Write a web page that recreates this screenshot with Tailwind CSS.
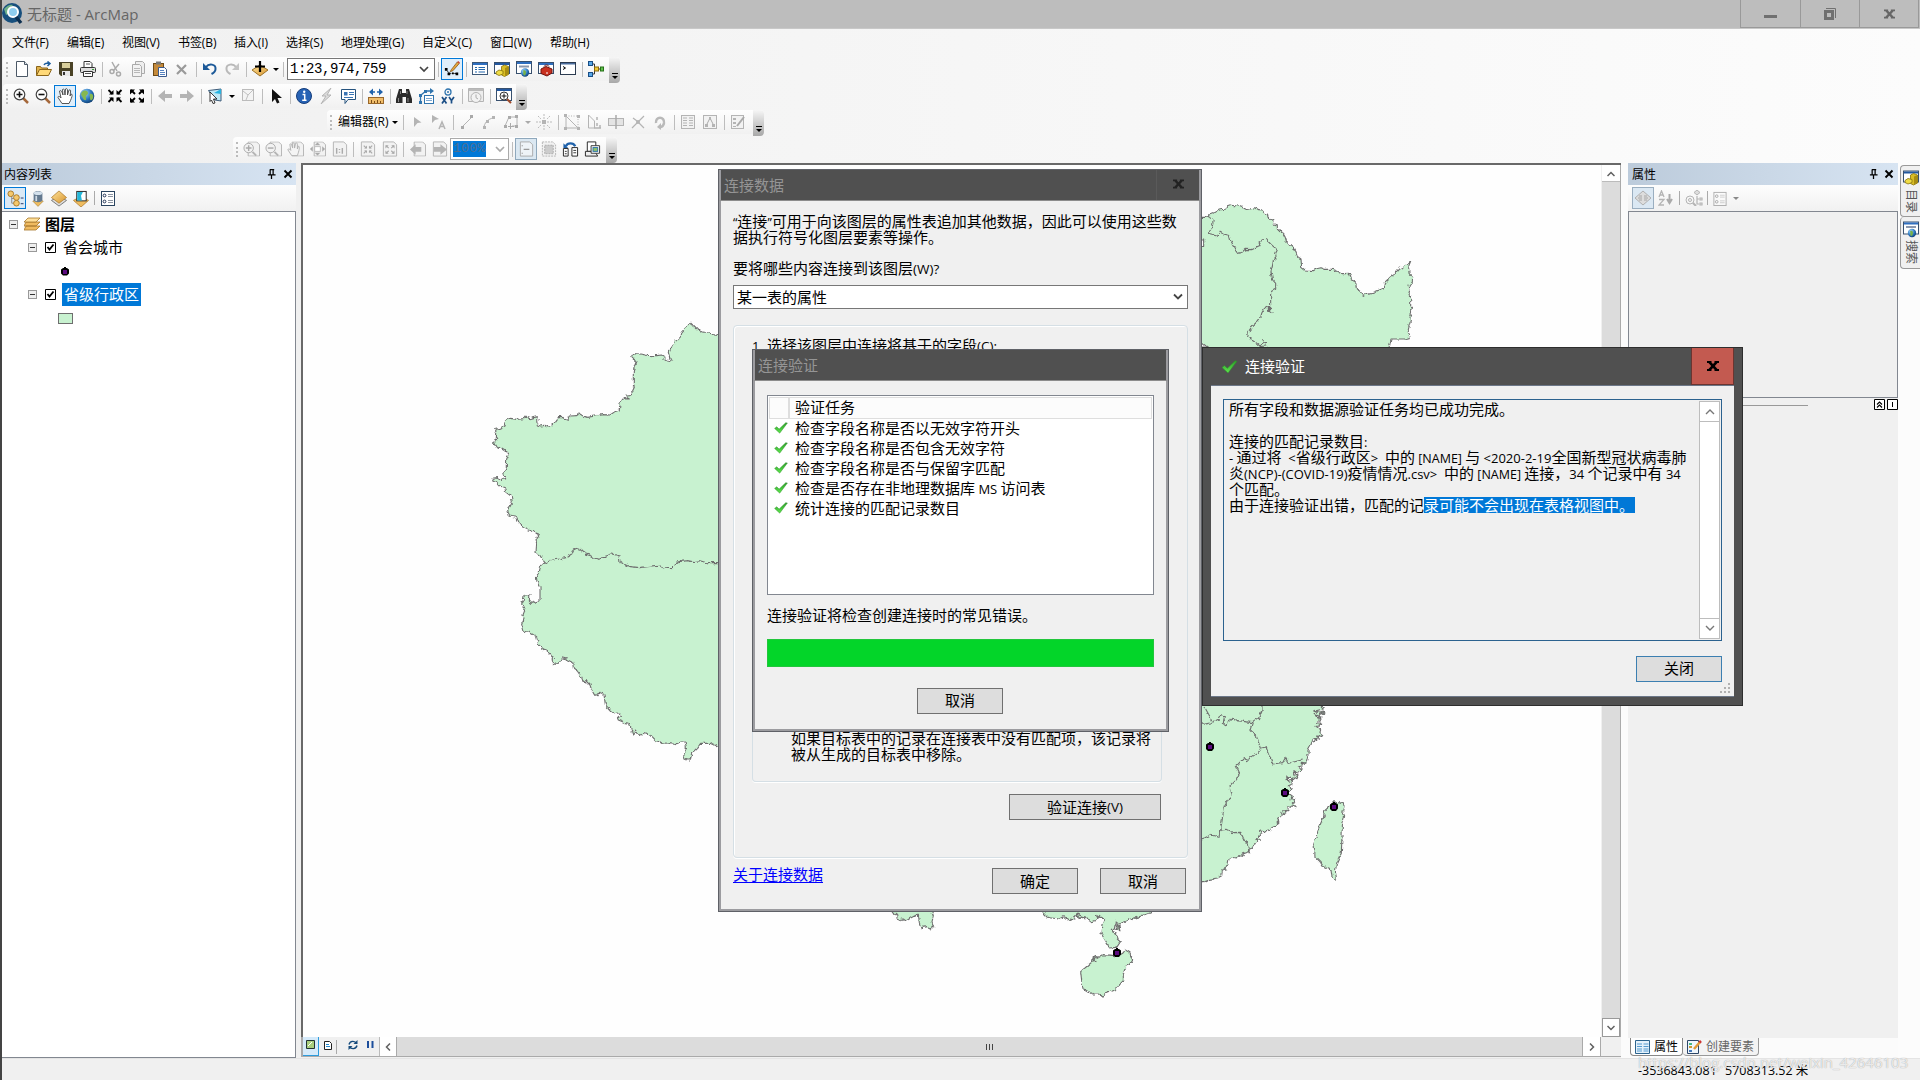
<!DOCTYPE html>
<html lang="zh-CN">
<head>
<meta charset="utf-8">
<title>无标题 - ArcMap</title>
<script src="https://cdn.jsdelivr.net/npm/@tailwindcss/browser@4"></script>
</head>
<body class="relative w-[1920px] h-[1080px] overflow-hidden bg-[#f0f0f0] text-black font-['Open_Sans','Noto_Sans_CJK_SC',sans-serif] text-[12px] leading-none whitespace-nowrap">

<svg width="0" height="0" class="absolute">
  <defs>
    <filter id="coast" x="0" y="0" width="1" height="1" color-interpolation-filters="sRGB"><feTurbulence type="fractalNoise" baseFrequency=".22" numOctaves="2" seed="4" result="n"/><feDisplacementMap in="SourceGraphic" in2="n" scale="5" xChannelSelector="R" yChannelSelector="G"/></filter>
    <radialGradient id="g-globe" cx=".35" cy=".3" r=".8"><stop offset="0" stop-color="#9fd8ff"/><stop offset=".6" stop-color="#2670b8"/><stop offset="1" stop-color="#0b3565"/></radialGradient>
    <linearGradient id="g-check" x1="0" y1="0" x2="0" y2="1"><stop offset="0" stop-color="#2f9c2c"/><stop offset="1" stop-color="#5ee64e"/></linearGradient>
    <linearGradient id="g-gold" x1="0" y1="0" x2="1" y2="1"><stop offset="0" stop-color="#ffe39a"/><stop offset="1" stop-color="#d8952f"/></linearGradient>
    <symbol id="new" viewBox="0 0 16 16"><path d="M2.500.5h8l3 3v12h-11z" fill="#fff" stroke="#4c5866"/><path d="M10.500.5v3h3" fill="#dfe8f0" stroke="#4c5866"/></symbol>
    <symbol id="open" viewBox="0 0 16 16"><path d="M.5 14.500v-9h4l1 1.500h6v3" fill="#e0b24c" stroke="#8a651b"/><path d="M.5 14.500l3-6h12l-3 6z" fill="#ffd978" stroke="#8a651b"/><path d="M8 4c1-2 3-2 5-1.500M11.500.5L14 2.500l-2.500 2.500" fill="none" stroke="#1b5c9e" stroke-width="1.500"/></symbol>
    <symbol id="save" viewBox="0 0 16 16"><path d="M1 1h14v14H3l-2-2z" fill="#4a4326"/><rect x="4" y="2" width="8" height="5" fill="#d9cf9c"/><rect x="4" y="10" width="8" height="5" fill="#e8e8e8"/><rect x="5" y="11" width="2" height="3" fill="#333"/></symbol>
    <symbol id="print" viewBox="0 0 16 16"><path d="M4 6V.5h6l2 2V6" fill="#fff" stroke="#333"/><rect x=".5" y="6.500" width="15" height="5" rx="1" fill="#ddd" stroke="#333"/><path d="M3.500 10.500h9v5h-9z" fill="#fff" stroke="#333"/><path d="M5 12.500h6M6 3h4" stroke="#555"/><rect x="12" y="8" width="2" height="1" fill="#3a9c3a"/></symbol>
    <symbol id="cut" viewBox="0 0 16 16"><path d="M4 1l5 9M11 3l-6 7" stroke="#aaa" stroke-width="1.500" fill="none"/><circle cx="4" cy="10.500" r="2" fill="none" stroke="#aaa" stroke-width="1.500"/><circle cx="10.500" cy="13" r="2" fill="none" stroke="#aaa" stroke-width="1.500"/></symbol>
    <symbol id="copy" viewBox="0 0 16 16"><path d="M5.500.5h7l2 2v10h-9z" fill="#eee" stroke="#aaa"/><path d="M2.500 3.500h7l2 2v10h-9z" fill="#f2f2f2" stroke="#aaa"/><path d="M4 7.500h6M4 9.500h6M4 11.500h6" stroke="#b8b8b8"/></symbol>
    <symbol id="paste" viewBox="0 0 16 16"><rect x="1.500" y="2.500" width="10" height="12" fill="#c58a3a" stroke="#6d4a17"/><rect x="4" y=".5" width="5" height="3" fill="#777"/><path d="M6.500 6.500h6l2 2v7h-8z" fill="#fff" stroke="#3c5a8c"/><path d="M8 9.500h4M8 11.500h5M8 13.500h5" stroke="#5582c0"/></symbol>
    <symbol id="del" viewBox="0 0 16 16"><path d="M3 4l9 9M12 4l-9 9" stroke="#9a9a9a" stroke-width="2.200"/></symbol>
    <symbol id="undo" viewBox="0 0 16 16"><path d="M4 6c3-4 10-3 9.500 2 0 2.500-2 4-4 5" fill="none" stroke="#1d5a99" stroke-width="2"/><path d="M1 2v7h7z" fill="#1d5a99"/></symbol>
    <symbol id="redo" viewBox="0 0 16 16"><path d="M12 6c-3-4-10-3-9.500 2 0 2.500 2 4 4 5" fill="none" stroke="#b9b9b9" stroke-width="2"/><path d="M15 2v7H8z" fill="#c4c4c4"/></symbol>
    <symbol id="add" viewBox="0 0 16 16"><path d="M8 4l8 5-8 6-8-6z" fill="url(#g-gold)" stroke="#9b7125"/><path d="M8 0v11M3 5.500h10" stroke="#000" stroke-width="2.200"/></symbol>
    <symbol id="editor" viewBox="0 0 18 18"><path d="M2 9l4 5h8" fill="none" stroke="#000" stroke-dasharray="2 1"/><path d="M1 8h3v3H1zM4 13h3v3H4zM13 13h3v3h-3zM9 13h2v2H9z"/><path d="M8 10l7-9 2 2-7 8-3 1z" fill="#e7a83c" stroke="#7b4d12" stroke-width=".8"/><path d="M15 1l2 2 1-1-2-2z" fill="#d0442c"/></symbol>
    <symbol id="toc" viewBox="0 0 16 16"><rect x=".5" y="1.500" width="15" height="12" fill="#fff" stroke="#3c5878"/><rect x="1" y="2" width="14" height="2" fill="#2f6fc0"/><path d="M3 6.500h2M3 8.500h2M3 11h2M6.500 6.500H13M6.500 8.500H13M6.500 11H13" stroke="#2569ad" stroke-width="1.200"/></symbol>
    <symbol id="catalog" viewBox="0 0 16 16"><rect x=".5" y="1.500" width="15" height="11" fill="#fff" stroke="#38506e"/><rect x="1" y="2" width="14" height="2" fill="#2358a0"/><path d="M7.500 5.500l3-1.500 4 1.500v8l-4 2-3-1.500z" fill="#d9bd25" stroke="#87710d" stroke-width=".8"/><path d="M11 7v8l3.500-2V5.500z" fill="#a88d10"/><path d="M2 11l3-2 4 1v3l-4 1.500L2 13z" fill="#efdc45" stroke="#87710d" stroke-width=".8"/></symbol>
    <symbol id="search" viewBox="0 0 16 16"><rect x=".5" y=".5" width="15" height="12" fill="#fff" stroke="#38506e"/><rect x="1" y="1" width="14" height="2" fill="#2f6fc0"/><path d="M3 5.500h10" stroke="#8a97ad" stroke-width="2"/><circle cx="9" cy="11.500" r="4.200" fill="url(#g-globe)"/><path d="M7 9.500c3-1 4 2 2 5-3 0-1-3-2-5" fill="#75b04a"/></symbol>
    <symbol id="toolbox" viewBox="0 0 16 16"><rect x=".5" y="1.500" width="15" height="11" fill="#fff" stroke="#38506e"/><rect x="1" y="2" width="14" height="2" fill="#2f6fc0"/><path d="M3 8l5-2.500 6 2.500v4l-5 3-6-2.500z" fill="#c9301f" stroke="#6f1510"/><path d="M6 5.500c1-2 4-2 5 0" fill="none" stroke="#6f1510"/><path d="M9 11v2" stroke="#fff"/></symbol>
    <symbol id="python" viewBox="0 0 16 16"><rect x=".5" y="1.500" width="15" height="12" fill="#fff" stroke="#2c3b50"/><rect x="1" y="2" width="14" height="1.500" fill="#4a6c9c"/><path d="M3 5.500l2.500 1.500L3 8.500" fill="none" stroke="#000"/></symbol>
    <symbol id="model" viewBox="0 0 16 16"><path d="M4 3h2.500v10H4M6.500 8h6" fill="none" stroke="#333"/><rect x=".5" y=".5" width="4" height="4" fill="#58a8e8" stroke="#1a4e86"/><rect x=".5" y="11.500" width="4" height="4" fill="#58a8e8" stroke="#1a4e86"/><rect x="6.500" y="6" width="4" height="4" fill="#f2c938" stroke="#8a6a0c"/><rect x="12.500" y="6" width="3" height="4" fill="#5fc14c" stroke="#277018"/></symbol>
    <symbol id="zin" viewBox="0 0 16 16"><path d="M10 10l5 5" stroke="#a5683b" stroke-width="2.500"/><circle cx="6.500" cy="6.500" r="5.300" fill="#fff" stroke="#444" stroke-width="1.200"/><path d="M3.500 6.500h6M6.500 3.500v6" stroke="#111" stroke-width="1.600"/></symbol>
    <symbol id="zout" viewBox="0 0 16 16"><path d="M10 10l5 5" stroke="#a5683b" stroke-width="2.500"/><circle cx="6.500" cy="6.500" r="5.300" fill="#fff" stroke="#444" stroke-width="1.200"/><path d="M3.500 6.500h6" stroke="#111" stroke-width="1.600"/></symbol>
    <symbol id="pan" viewBox="0 0 16 16"><path d="M5 15.500L1 9.500c0-2 2-1 3 .5L2.500 3c1-1 2 0 2.500 1l1 3-.5-5.500c1-1 2 0 2 1L8 7l.5-6c1-1 2 0 2 1V7l1.500-5c1-.5 2 0 1.500 2L13 8l1-2c2 0 1 3-.5 6.500L12 15.500z" fill="#fff" stroke="#444" stroke-width=".9"/></symbol>
    <symbol id="globe" viewBox="0 0 16 16"><circle cx="8" cy="8" r="7.300" fill="url(#g-globe)"/><path d="M3 4c3-3 6-1 6 1s-3 2-2 5-2 3-3 0-3-3-1-6zM11 6c2-1 4 1 3 4s-3 3-3 0 -1-3 0-4z" fill="#86b850"/></symbol>
    <symbol id="fin" viewBox="0 0 16 16"><path d="M1.500 2l4 4M14.500 2l-4 4M1.500 14l4-4M14.500 14l-4-4" stroke="currentColor" stroke-width="1.800"/><path d="M6.500 2v4.500H2zM9.500 2v4.500H14zM2 9.500h4.500V14zM14 9.500H9.500V14z" fill="currentColor"/></symbol>
    <symbol id="fout" viewBox="0 0 16 16"><path d="M2 2l4 4M14 2l-4 4M2 14l4-4M14 14l-4-4" stroke="currentColor" stroke-width="1.800"/><path d="M1 1.500h5L1 6.500zM15 1.500h-5l5 5zM1 14.500h5l-5-5zM15 14.500h-5l5-5z" fill="currentColor"/></symbol>
    <symbol id="back" viewBox="0 0 16 16"><path d="M8 2v4h7v4H8v4L1 8z" fill="#b4b4b4"/></symbol>
    <symbol id="fwd" viewBox="0 0 16 16"><path d="M8 2v4H1v4h7v4l7-6z" fill="#b4b4b4"/></symbol>
    <symbol id="selfeat" viewBox="0 0 16 16"><path d="M1.500 2.500L14 1v12l-6-1z" fill="#bfe8f5" stroke="#3c5a78"/><path d="M7 5l7-4v5z" fill="#28b4e0"/><path d="M3 4l7 7H6.500L8 15l-2 .5L4.500 12 3 13.500z" fill="#fff" stroke="#222" stroke-width=".9"/></symbol>
    <symbol id="clrsel" viewBox="0 0 16 16"><rect x="2.500" y="1.500" width="11" height="11" fill="#f4f4f4" stroke="#bbb"/><path d="M3 3l5 4 5-5M8 7l-2 5" fill="none" stroke="#c0c0c0"/></symbol>
    <symbol id="arrow" viewBox="0 0 16 16"><path d="M4 1v13l3-3 2 4.500 2.500-1-2-4.500H14z" fill="#111"/></symbol>
    <symbol id="info" viewBox="0 0 16 16"><circle cx="8" cy="8" r="7.500" fill="#2763b5" stroke="#153e7c"/><path d="M6.500 6.500h2.200v5.500M6.200 12.300h4.300" fill="none" stroke="#fff" stroke-width="1.500"/><circle cx="8.200" cy="3.800" r="1.200" fill="#fff"/></symbol>
    <symbol id="bolt" viewBox="0 0 16 16"><path d="M13 0L4 8h4l-5 8 10-9H9z" fill="#ddd" stroke="#b4b4b4"/></symbol>
    <symbol id="popup" viewBox="0 0 16 16"><path d="M1.500 1.500h14v10H8l-3 4v-4H1.500z" fill="#fff" stroke="#25527d"/><path d="M9 4.500h5M9 6.500h5M4 9.500h9" stroke="#3a75b4"/><rect x="4" y="4" width="3.500" height="3.500" fill="#3a75b4"/></symbol>
    <symbol id="measure" viewBox="0 0 16 16"><rect x=".5" y="9.500" width="15" height="6" fill="#f0bd6a" stroke="#99672a"/><path d="M3.500 12v3M6.500 13v2M9.500 12v3M12.500 13v2" stroke="#7a4d18"/><path d="M4 4h8" stroke="#1f62ab" stroke-width="1.500" stroke-dasharray="3 2"/><path d="M5 .5v7L1 4zM11 .5v7L15 4z" fill="#1f62ab"/></symbol>
    <symbol id="find" viewBox="0 0 16 16"><path d="M3 1h3v4h4V1h3l3 10v4h-6V9H6.500v6H0v-4z" fill="#2b2b2b"/><path d="M2.500 10v4M12 10v4M4.500 3v3M11 3v3" stroke="#888"/></symbol>
    <symbol id="route" viewBox="0 0 16 16"><rect x="6.500" y="7.500" width="9" height="8" fill="#fff" stroke="#2f74ae"/><path d="M8 10.500h6M8 12.500h6" stroke="#7ba6cf"/><path d="M2.500 14V8M3 7l5-4h5" fill="none" stroke="#2f74ae" stroke-width="1.300"/><path d="M1 6h3v3H1zM1 13h3v3H1zM6 2h3v3H6zM12 0l4 3-4 3z" fill="#2f74ae"/></symbol>
    <symbol id="xy" viewBox="0 0 16 16"><circle cx="8" cy="4" r="3" fill="none" stroke="#2f74ae" stroke-width="1.300"/><circle cx="8" cy="4" r="1" fill="#2f74ae"/><path d="M2 9l4.500 6.500M6.500 9L2 15.500M9 9l2.500 3.500L14 9M11.500 12v3.500" fill="none" stroke="#1c4f86" stroke-width="1.700"/></symbol>
    <symbol id="clock" viewBox="0 0 16 16"><path d="M.5.500h15v13H.5z" fill="#ededed" stroke="#b4b4b4"/><path d="M1 2h14" stroke="#bbb" stroke-width="2"/><circle cx="8" cy="9.500" r="5" fill="#f2f2f2" stroke="#b4b4b4"/><path d="M8 6.500v3.200l2 1.300" fill="none" stroke="#aaa"/></symbol>
    <symbol id="viewer" viewBox="0 0 16 16"><rect x=".5" y=".5" width="15" height="12" fill="#fff" stroke="#38506e"/><rect x="1" y="1" width="14" height="2" fill="#2358a0"/><path d="M11 11l4 4" stroke="#9d4a2b" stroke-width="2"/><circle cx="8" cy="8" r="4" fill="#fff" stroke="#333"/><path d="M5.500 8h5M8 5.500v5" stroke="#111"/></symbol>
    <symbol id="e1" viewBox="0 0 16 16"><path d="M5 3v10l3.500-4 4-.5z" fill="#b4b4b4"/></symbol>
    <symbol id="e2" viewBox="0 0 16 16"><path d="M1 1v8l3-3 4-1z" fill="#b4b4b4"/><path d="M8 15l3-7 3 7M9 12.500h4" fill="none" stroke="#b4b4b4" stroke-width="1.500"/></symbol>
    <symbol id="e3" viewBox="0 0 16 16"><path d="M3 13L13 3" stroke="#b4b4b4"/><path d="M2 12h3v3H2zM11 1h3v3h-3z" fill="#aaa"/></symbol>
    <symbol id="e4" viewBox="0 0 16 16"><path d="M3 14c0-5 4-9 9-10" fill="none" stroke="#b4b4b4"/><path d="M2 12h3v3H2zM11 2h3v3h-3zM5 6h3v3H5z" fill="#b4b4b4"/></symbol>
    <symbol id="e5" viewBox="0 0 16 16"><path d="M2 12l4-9h8v9H9" fill="none" stroke="#b4b4b4"/><path d="M5 2h3v3H5zM12 1h3v3h-3zM1 11h3v3H1zM12 11h3v3h-3zM7 9h1v6H7zM5 12h6v1H5z" fill="#aaa"/></symbol>
    <symbol id="e6" viewBox="0 0 16 16"><path d="M8 0v5M8 11v5M0 8h5M11 8h5M2 2l3 3M14 2l-3 3M2 14l3-3M14 14l-3-3" stroke="#bbb" stroke-dasharray="2 1"/><rect x="6" y="6" width="4" height="4" fill="#b4b4b4"/></symbol>
    <symbol id="e7" viewBox="0 0 16 16"><path d="M2 2v12h12" fill="none" stroke="#b4b4b4"/><path d="M2 2h12v12" fill="none" stroke="#b4b4b4" stroke-dasharray="1 1.500"/><path d="M2 2l12 12" stroke="#b4b4b4"/><path d="M0 0h3v3H0zM13 1h3v3h-3zM0 13h3v3H0zM13 13h3v3h-3z" fill="#b4b4b4"/></symbol>
    <symbol id="e8" viewBox="0 0 16 16"><path d="M2.500 1v13h6V7z" fill="none" stroke="#b4b4b4"/><path d="M11 3v3M11 9v3M14 11v3M8 14h7" stroke="#b4b4b4" stroke-width="1.500"/></symbol>
    <symbol id="e9" viewBox="0 0 16 16"><rect x=".5" y="4.500" width="15" height="7" fill="#e4e4e4" stroke="#b4b4b4"/><path d="M8 1v14" stroke="#aaa" stroke-width="1.500"/></symbol>
    <symbol id="e10" viewBox="0 0 16 16"><path d="M2 14L14 2M3 4l4 3M9 9l5 5" stroke="#b4b4b4" stroke-width="1.200"/><circle cx="8" cy="8" r="2" fill="#b4b4b4"/></symbol>
    <symbol id="e11" viewBox="0 0 16 16"><path d="M4 9c-1-7 9-7 8 0-.5 3-2 4-4 4" fill="none" stroke="#b9b9b9" stroke-width="2.500"/><path d="M9 9v7l-4-3z" fill="#b9b9b9"/></symbol>
    <symbol id="e12" viewBox="0 0 16 16"><rect x="1.500" y="1.500" width="13" height="13" fill="#f2f2f2" stroke="#b4b4b4"/><path d="M3 4h4M3 6.500h4M3 9h4M3 11.500h4M9 4h4M9 6.500h4M9 9h4M9 11.500h4" stroke="#b4b4b4"/></symbol>
    <symbol id="e13" viewBox="0 0 16 16"><rect x="1.500" y="1.500" width="13" height="13" fill="#f2f2f2" stroke="#b4b4b4"/><path d="M4 12l4-8 4 8" fill="none" stroke="#aaa"/><path d="M7 3h2v3H7zM3 10h3v3H3zM10 10h3v3h-3z" fill="#b4b4b4"/></symbol>
    <symbol id="e14" viewBox="0 0 16 16"><rect x="1.500" y="1.500" width="12" height="13" fill="#f2f2f2" stroke="#b4b4b4"/><path d="M3 4h3v2H3zM3 8h3v2H3zM3 12h3v1H3z" fill="#b4b4b4"/><path d="M7 12l7-9" stroke="#aaa" stroke-width="2"/></symbol>
    <symbol id="page" viewBox="0 0 18 16"><path d="M5.500.5h9l3 3v12h-12z" fill="#f2f2f2" stroke="#b4b4b4"/></symbol>
    <symbol id="p1" viewBox="0 0 18 16"><use href="#page"/><circle cx="6" cy="7" r="5" fill="#f2f2f2" stroke="#aaa"/><path d="M3 7h6M6 4v6" stroke="#aaa" stroke-width="1.500"/><path d="M10 11l4 4" stroke="#b4b4b4" stroke-width="2"/></symbol>
    <symbol id="p2" viewBox="0 0 18 16"><use href="#page"/><circle cx="6" cy="7" r="5" fill="#f2f2f2" stroke="#aaa"/><path d="M3 7h6" stroke="#aaa" stroke-width="1.500"/><path d="M10 11l4 4" stroke="#b4b4b4" stroke-width="2"/></symbol>
    <symbol id="p3" viewBox="0 0 18 16"><use href="#page"/><path d="M5 15L1 9c0-2 2-1 3 .5L3 3c1-1 2 0 2 1l1 3V2c1-1 2 0 2 1v4l1-5c1-1 2 0 2 1v5l1-3c2 0 1 4-1 10z" fill="#f4f4f4" stroke="#b0b0b0"/></symbol>
    <symbol id="p4" viewBox="0 0 18 16"><use href="#page"/><path d="M9 1l3 3H6zM9 15l3-3H6zM1 8l3-3v6zM17 8l-3-3v6z" fill="#aaa"/><rect x="6" y="5.500" width="6" height="5" fill="#fff" stroke="#bbb"/></symbol>
    <symbol id="p5" viewBox="0 0 18 16"><path d="M2.500.5h11l3 3v12h-14z" fill="#f2f2f2" stroke="#b4b4b4"/><path d="M6 7v6M12 7v6M9 8v1M9 11v1" stroke="#aaa" stroke-width="1.500"/></symbol>
    <symbol id="p6" viewBox="0 0 18 16"><path d="M2.500.5h11l3 3v12h-14z" fill="#f2f2f2" stroke="#b4b4b4"/><svg x="4" y="3" width="11" height="11" class="text-[#aaa]"><use href="#fin"/></svg></symbol>
    <symbol id="p7" viewBox="0 0 18 16"><path d="M2.500.5h11l3 3v12h-14z" fill="#f2f2f2" stroke="#b4b4b4"/><svg x="4" y="3" width="11" height="11" class="text-[#aaa]"><use href="#fout"/></svg></symbol>
    <symbol id="p8" viewBox="0 0 18 16"><use href="#page"/><path d="M7 3v3h6v5H7v3L1 8.500z" fill="#b4b4b4"/></symbol>
    <symbol id="p9" viewBox="0 0 18 16"><path d="M2.500.5h11l3 3v12h-14z" fill="#f2f2f2" stroke="#b4b4b4"/><path d="M10 3v3H3v5h7v3l7-5.500z" fill="#b4b4b4"/></symbol>
    <symbol id="p10" viewBox="0 0 18 16"><path d="M2.500.5h10l3 3v12h-13z" fill="#eef3f7" stroke="#aaa"/><path d="M6 8.500h6M4.500 5V4M4.500 13v-1" stroke="#999" stroke-width="1.300"/></symbol>
    <symbol id="p11" viewBox="0 0 18 16"><path d="M2.500.5h11l3 3v12h-14z" fill="#f2f2f2" stroke="#b4b4b4" stroke-dasharray="2 1"/><rect x="5" y="4" width="9" height="9" fill="#ccc" stroke="#aaa" stroke-dasharray="2 1"/></symbol>
    <symbol id="p12" viewBox="0 0 18 16"><path d="M1.500 7.500h5v8h-5zM10.500 6.500h6v9h-6z" fill="#fff" stroke="#222"/><path d="M3 10.500h2M3 13h2M12 9.500h3M12 12h3" stroke="#333"/><path d="M4 5c2-4 8-4 10 0" fill="none" stroke="#1f62ab" stroke-width="2.500"/><path d="M1.500 2v5h5z" fill="#1f62ab"/></symbol>
    <symbol id="p13" viewBox="0 0 18 16"><path d="M3.500.5h9v10h-9z" fill="#fff" stroke="#222"/><path d="M1.500 10.500h10l3 5h-13z" fill="#eee" stroke="#222"/><path d="M7.500 4.500h9v8h-9z" fill="#fff" stroke="#333"/><rect x="9.500" y="6.500" width="5" height="4" fill="#8fc46a" stroke="#2b6ea8"/></symbol>
    <symbol id="ck" viewBox="0 0 16 14"><path d="M.5 7.500L3 5.500l2.800 2.800L13.500.8l2 .4L6.500 13z" fill="url(#g-check)" stroke="#2c8d29" stroke-width=".5"/></symbol>
    <symbol id="pin" viewBox="0 0 10 12"><path d="M3 .7h5M3.500 1v5M6.800 1v5M1 6.500h8.500M5 7v4" fill="none" stroke="#000" stroke-width="1.400"/></symbol>
    <symbol id="xx" viewBox="0 0 10 10"><path d="M1.500 1.500l7 7M8.500 1.500l-7 7" stroke="currentColor" stroke-width="1.900"/></symbol>
    <symbol id="wx" viewBox="0 0 12 10"><path d="M0 0h4.500v1.500L6 3l1.500-1.500V0H12v2h-1.500L7.800 5l2.700 3H12v2H7.500V8.500L6 7 4.500 8.500V10H0V8h1.500l2.700-3L1.500 2H0z" fill="currentColor"/></symbol>
    <symbol id="l1" viewBox="0 0 18 18"><path d="M5 7v7h6M5 9h6" fill="none" stroke="#888"/><circle cx="4" cy="4" r="3" fill="#f5c96e" stroke="#a97928"/><circle cx="10" cy="8" r="3" fill="#f5c96e" stroke="#a97928"/><circle cx="10" cy="14" r="3" fill="#f5c96e" stroke="#a97928"/><path d="M14.500 8.500h3M14.500 14.500h3" stroke="#236"/></symbol>
    <symbol id="l2" viewBox="0 0 16 18"><path d="M2 12l6 6 6-6-6-3z" fill="#efbc5f" stroke="#9b7430" stroke-width=".6"/><path d="M3 3c0-3 10-3 10 0v8c0 3-10 3-10 0z" fill="#64798f"/><ellipse cx="8" cy="3" rx="5" ry="2" fill="#d3e0ec"/><path d="M6 6v6" stroke="#cfdbe6" stroke-width="2"/></symbol>
    <symbol id="l3" viewBox="0 0 18 18"><path d="M1 11l8 6 8-6-8-4z" fill="#ddd" stroke="#777"/><path d="M9 1l8 7-8 6-8-6z" fill="url(#g-gold)" stroke="#ae7c2d" stroke-width=".8"/></symbol>
    <symbol id="l4" viewBox="0 0 18 18"><path d="M1 11l8 7 8-7-8-4z" fill="#efbc5f" stroke="#ae7c2d" stroke-width=".8"/><rect x="4.500" y="1.500" width="10" height="10" fill="#fff" stroke="#222"/><path d="M5 2h6L9 6l1 5H5z" fill="#25b7d8"/></symbol>
    <symbol id="l5" viewBox="0 0 16 16"><rect x="1.500" y="1.500" width="13" height="14" fill="#fff" stroke="#2b4560"/><circle cx="4.500" cy="5.500" r="1.400" fill="none" stroke="#235"/><circle cx="4.500" cy="11.500" r="1.400" fill="none" stroke="#235"/><path d="M8 4.500h5M8 6.500h5M8 10.500h5M8 12.500h5" stroke="#8a93a0"/></symbol>
    <symbol id="stack" viewBox="0 0 16 14"><path d="M2 9l-2 4h12l4-4zM2 5l-2 4h12l4-4z" fill="#f0bb60" stroke="#a6762b" stroke-width=".8"/><path d="M4 1h12l-4 4H0z" fill="#ffdf98" stroke="#a6762b" stroke-width=".8"/></symbol>
    <symbol id="r1" viewBox="0 0 18 18"><path d="M9 2l8 7-8 7-8-7z" fill="#ddd" stroke="#b0b0b0"/><path d="M5 7h3M10 7h3M4 9h4M10 9h4M5 11h3M10 11h3" stroke="#a6a6a6"/></symbol>
    <symbol id="r2" viewBox="0 0 16 16"><path d="M1 7l2.500-6L6 7M2 5h3M1 9.500h5L1 15h5" fill="none" stroke="#b4b4b4" stroke-width="1.300"/><path d="M11.500 4v8M9 9l2.500 4L14 9" fill="none" stroke="#aaa" stroke-width="2"/></symbol>
    <symbol id="r3" viewBox="0 0 18 16"><circle cx="5" cy="10" r="4" fill="none" stroke="#b4b4b4"/><circle cx="5" cy="10" r="1.500" fill="none" stroke="#b4b4b4"/><path d="M8 13l3 3" stroke="#b4b4b4" stroke-width="2"/><path d="M12 0l3 2.500-3 2.500-3-2.500z" fill="#ddd" stroke="#b4b4b4"/><path d="M12 6v8h2M12 9h2M15 8h2v2h-2zM15 13h2v2h-2z" fill="none" stroke="#b4b4b4" stroke-width="1.200"/></symbol>
  </defs>
</svg>

<main class="flex h-full w-full flex-col border-l-2 border-[#444]">
  <!-- title bar -->
  <header class="flex h-[29px] shrink-0 items-start border-b border-[#c8c8c8] bg-[#bdbdbd] text-[#666]">
    <svg class="mt-[3px] h-[22px] w-[21px]" viewBox="0 0 21 22"><circle cx="10" cy="10" r="10" fill="#174f7d"/><path d="M2 6c3-4 7-5 9-4l-4 4 2 3-5 3z" fill="#6fb08b"/><circle cx="11" cy="9" r="5" fill="#8fcdee" stroke="#fff" stroke-width="2"/><path d="M14 14l5 6" stroke="#0d2f50" stroke-width="3.500"/></svg>
    <span class="ml-1 mt-[7px] flex-1 text-[15px]">无标题 - ArcMap</span>
    <div class="flex h-[28px] border-l border-[#999]">
      <span class="flex w-[60px] items-center justify-center border-r border-b border-[#999]"><i class="mt-[5px] h-[3px] w-[13px] bg-[#707070]"></i></span>
      <span class="flex w-[59px] items-center justify-center border-r border-b border-[#999]"><svg class="h-[12px] w-[12px]" viewBox="0 0 12 12"><path d="M1.500 3.500h7v7h-7z" fill="none" stroke="#707070" stroke-width="3"/><path d="M2 .5h9.500V10" fill="none" stroke="#707070"/></svg></span>
      <span class="flex w-[59px] items-center justify-center border-r border-b border-[#999]"><svg class="h-[10px] w-[11px]"><use href="#wx"/></svg></span>
    </div>
    <span class="w-[1px]"></span>
  </header>

  <section class="h-[134px] shrink-0 bg-linear-to-r from-[#f0f0f0] to-[#fcfcfc]">
    <nav class="flex h-[28px] items-center pl-[10px] text-[12px] tracking-[-0.1px]">
      <span class="w-[55px]">文件(F)</span><span class="w-[55px]">编辑(E)</span><span class="w-[56px]">视图(V)</span><span class="w-[56px]">书签(B)</span><span class="w-[52px]">插入(I)</span><span class="w-[55px]">选择(S)</span><span class="w-[81px]">地理处理(G)</span><span class="w-[68px]">自定义(C)</span><span class="w-[60px]">窗口(W)</span><span>帮助(H)</span>
    </nav>
    <div class="ml-px flex h-[24px] w-[617px] items-center rounded-sm bg-linear-to-b from-[#fefefe] to-[#f1f1f1]" data-bar="grip8 new open save print | cut copy paste del | undo redo | add v9 | scale | *editor | toc catalog search toolbox python | model over"></div>
    <div class="ml-px mt-[3px] flex h-[24px] w-[524px] items-center rounded-sm bg-linear-to-b from-[#fefefe] to-[#f1f1f1]" data-bar="grip7 zin zout *pan globe | fin fout | back fwd | selfeat v11 clrsel | arrow | info bolt popup | measure | find route xy | clock | viewer over"></div>
    <div class="ml-[325px] mt-[2px] flex h-[24px] w-[437px] items-center rounded-sm bg-linear-to-b from-[#fefefe] to-[#f1f1f1]" data-bar="grip11 label v11 | e1 e2 | e3 e4 e5 d11 e6 | e7 e8 e9 e10 e11 | e12 e13 | e14 over"></div>
    <div class="ml-[231px] mt-[3px] flex h-[24px] w-[384px] items-center rounded-sm bg-linear-to-b from-[#fefefe] to-[#f1f1f1]" data-bar="grip7 p1 p2 p3 p4 p5 | p6 p7 | p8 p9 pct | *p10 p11 p12 p13 over"></div>
  </section>

  <div class="flex h-[895px] shrink-0">
    <!-- table of contents -->
    <aside class="flex h-full w-[294px] flex-col">
      <div class="flex h-[22px] items-center bg-linear-to-r from-[#bccbdb] to-[#d7e4f2] pl-[2px] pr-[2px]">
        <span class="flex-1 pt-px">内容列表</span>
        <svg class="mr-[7px] h-[11px] w-[9px]"><use href="#pin"/></svg><svg class="mr-px h-[10px] w-[10px]"><use href="#xx"/></svg>
      </div>
      <div class="flex h-[26px] items-center gap-[4px] bg-linear-to-b from-[#fdfdfd] to-[#f1f1f1] pl-[2px]">
        <span class="flex h-[22px] w-[22px] items-center justify-center border border-[#0078d7] bg-[#dbe9f5]"><svg class="h-[17px] w-[17px]"><use href="#l1"/></svg></span>
        <svg class="mx-px h-[17px] w-[14px]"><use href="#l2"/></svg><svg class="h-[17px] w-[18px]"><use href="#l3"/></svg><svg class="h-[17px] w-[18px]"><use href="#l4"/></svg>
        <i class="h-[14px] w-px bg-[#aaa]"></i><svg class="ml-px h-[16px] w-[16px]"><use href="#l5"/></svg>
      </div>
      <div class="w-full flex-1 border-t border-r border-b border-[#828790] bg-white text-[15px]">
        <div class="flex h-[24px] items-center pl-[7px] font-bold"><i class="mr-[6px] flex h-[9px] w-[9px] items-center border border-[#999] bg-[#eee] px-px"><b class="h-px w-full bg-[#333]"></b></i><svg class="mr-[5px] h-[14px] w-[16px]"><use href="#stack"/></svg>图层</div>
        <div class="flex h-[23px] items-center pl-[26px]"><i class="mr-[8px] flex h-[9px] w-[9px] items-center border border-[#999] bg-[#eee] px-px"><b class="h-px w-full bg-[#333]"></b></i><svg class="mr-[7px] h-[11px] w-[11px]" viewBox="0 0 11 11"><path d="M.5.500h10v10H.5z" fill="#fff" stroke="#000"/><path d="M2.500 5l2 2.500 4-5" fill="none" stroke="#000" stroke-width="1.800"/></svg>省会城市</div>
        <div class="flex h-[24px] items-center pl-[59px]"><svg class="h-[9px] w-[8px]" viewBox="0 0 8 9"><path d="M2 1h1V0h2v1h1l2 1.500v4L6 8.500H2l-2-2v-4z"/><path d="M2 3h4v4H2z" fill="#5c0a80"/></svg></div>
        <div class="flex h-[23px] items-center pl-[26px]"><i class="mr-[8px] flex h-[9px] w-[9px] items-center border border-[#999] bg-[#eee] px-px"><b class="h-px w-full bg-[#333]"></b></i><svg class="mr-[6px] h-[11px] w-[11px]" viewBox="0 0 11 11"><path d="M.5.500h10v10H.5z" fill="#fff" stroke="#000"/><path d="M2.500 5l2 2.500 4-5" fill="none" stroke="#000" stroke-width="1.800"/></svg><span class="flex h-[23px] w-[79px] items-center bg-[#0078d7] pl-[2px] text-white">省级行政区</span></div>
        <div class="flex h-[24px] items-center pl-[56px]"><i class="h-[11px] w-[15px] border border-[#6e6e6e] bg-[#c8f2d0]"></i></div>
      </div>
    </aside>

    <!-- map view -->
    <section class="ml-[5px] flex h-[895px] w-[1320px] flex-col">
      <div class="flex h-[874px] border-t-2 border-l-2 border-[#696969]">
        <svg class="h-[872px] w-[1298px] bg-[#fefefe]" viewBox="303 165 1298 872">
          <g filter="url(#coast)" fill="#c8f2d0" stroke="#6e6e6e" stroke-width="3.300" stroke-linejoin="round">
            <path d="M303 165h1298v872H303z" fill="#fefefe" stroke="none"/>
            <g transform="translate(480 300) scale(.33333)">
              <path d="M760 110L714 103 690 100 670 96 655 90 640 75 634 74 628 68 620 80 604 97 600 110 590 120 573 145 568 157 575 183 560 180 551 174 545 165 530 167 500 166 480 162 460 161 455 168 468 186 463 200 460 215 460 255 463 262 458 272 460 283 440 285 437 290 448 297 430 296 420 308 418 330 405 335 390 345 370 344 320 352 305 347 297 342 290 347 268 348 262 358 250 353 235 352 222 370 215 373 205 381 195 376 182 378 172 375 170 362 172 350 150 356 138 352 135 348 130 356 110 358 88 355 75 367 72 378 55 386 44 388 50 400 49 410 53 416 38 425 44 434 50 444 62 442 75 450 88 463 80 480 79 500 71 518 77 537 57 538 54 533 40 534 38 543 50 548 54 555 75 564 77 576 93 588 97 606 90 620 83 628 88 648 110 652 118 670 130 683 145 690 178 703 168 715 170 730 168 757 180 767 196 790 178 800 175 820 169 830 171 845 180 860 180 902 155 910 148 903 150 884 145 888 132 888 130 900 125 912 134 932 129 945 132 955 125 970 132 994 150 998 170 1010 176 1035 190 1046 205 1056 220 1075 220 1090 226 1094 235 1090 245 1073 260 1077 278 1086 280 1105 292 1113 300 1125 305 1138 318 1143 330 1155 335 1170 344 1186 360 1180 372 1184 376 1214 390 1230 405 1242 416 1238 422 1245 412 1253 415 1260 435 1268 448 1270 452 1280 458 1302 466 1290 473 1300 485 1306 497 1298 510 1306 525 1322 545 1328 555 1330 570 1328 590 1331 603 1326 615 1325 620 1345 611 1365 618 1380 630 1380 635 1360 650 1345 662 1330 690 1330 700 1334 714 1342 760 1360Z"/>
              <path fill="none" d="M196 790L215 780 240 777 260 772 275 762 280 750 290 745 300 748 318 762 335 767 345 775 355 778 365 776 375 768 385 766 393 761 405 764 418 768 420 785 430 791 445 799 478 803 510 799 540 795 550 807 560 803 583 802 593 785 625 782 640 785 660 782 680 788 714 788 760 790"/>
            </g>
            <g transform="translate(1190 190) scale(.33333)">
              <path d="M0 90L36 82 48 82 55 76 68 71 80 62 105 57 112 50 125 46 145 48 160 54 168 58 183 60 188 53 198 54 206 59 215 60 222 68 232 72 234 82 240 85 252 93 250 101 262 106 262 117 275 123 285 140 290 156 298 165 312 177 318 185 323 200 333 207 335 232 345 240 370 242 380 236 393 233 405 238 425 238 440 244 460 254 480 253 484 270 492 273 497 280 500 298 510 304 520 316 530 310 545 308 580 294 583 278 600 262 612 254 625 238 640 230 652 225 662 216 656 232 657 250 668 262 667 273 657 285 660 300 657 312 662 325 662 350 667 355 660 380 661 395 655 415 655 430 661 443 645 447 603 447 594 490H0z"/>
              <path fill="none" d="M52 76L58 82 70 90 67 106 57 130 75 134 85 139 92 124 103 133 118 136 122 152 125 160 137 182 143 190 155 188 165 178 185 179 205 170 216 147 230 150 243 163 262 180 257 190 258 205 250 210 248 225 243 245 248 270 257 280 257 298 242 305 242 358 232 350 224 354 215 370 212 382 205 392 187 408 175 425 173 442 185 450 200 460 210 468 220 452 222 460 230 456 228 468 210 470M234 350L236 361 247 368M232 350l12 14"/>
              <path fill="#fff" d="M30 150h11v22H30zM30 455l8 5 6 5 12 6H30z"/>
            </g>
            <g transform="translate(1190 690) scale(.33333)">
              <path d="M0 30H396l-2 22 6 5-26 6 8 4 18-4 2 8-14 1 4 8-20-8 12 12 12-4 -6 14-10-2 0 7 12 0-2 9-12 1 14 10-2 12 8 6-10 6-4-6-4 15-6-6-8 2-2 10-2 8-8 14 0 12-2 12-3 10-4 8-12-3 6 8-14 3 8 9-15 10-7-5 4 12 12-4-6 14-8-4-5 8-7-9-6 5-5-8 3 16 14-3-2 12-10 5 10 10-12 10 14 10-4 12 12-2 2 9-10 4 10 12-16-6-8 6 4 10-16-4 6 12-14-2 0 10-10 6 6 6-10 10-4 8-10 4-4 12-10-8-8 8-12-2 6 8-10 5 4 12-14-2 6 10-10 6-6 12-10 4-4 9-12 4-6 8-12-2-4 7-14-3-8 6-4 20-12 6 10 6-14 4-2 14-12 7-28 4-6 10-10-4-4 6-14-2-6 12-12-10-16 4-14 0-6 10-6-6-4 16H0z"/>
              <path fill="none" d="M0 104L36 98 42 103 62 98 65 94 60 80 42 48M65 98L85 88 93 74 103 77 100 100 108 104 122 92 130 84 142 92 187 98M216 48L216 60 205 86 187 98 180 122 200 138 212 178 205 187 170 212 163 203 137 230 147 252 140 265 117 290 123 315 103 350 98 380 92 420 90 442 62 435 45 443 36 446 0 460M212 175L228 171 248 222 278 218 286 203 296 220 335 210M92 420L108 418 130 428 152 427 165 455 172 465 180 490"/>
              <path d="M420 348L432 335 460 342 462 350 458 365 464 378 457 410 454 490 440 520 436 545 439 562 432 568 426 562 423 540 400 530 390 515 375 500 374 480 371 460 385 420 400 385 404 362z"/>
              <path fill="none" d="M374 60l24 8-10 6M362 150l14 8 6-14"/>
            </g>
            <g transform="translate(740 560) scale(.33333)">
              <path d="M440 1030L462 1060 470 1066 472 1080 490 1077 498 1083 512 1074 535 1062 538 1088 543 1103 560 1100 575 1108 576 1096 581 1100 576 1085 580 1070 574 1050 574 1030z"/>
              <path d="M900 1040L912 1062 922 1072 960 1078 972 1070 985 1080 1004 1074 1010 1062 1018 1075 1035 1070 1048 1086 1068 1082 1078 1070 1094 1080 1086 1090 1083 1120 1092 1135 1104 1154 1106 1164 1130 1162 1141 1146 1130 1135 1130 1120 1114 1112 1124 1102 1126 1084 1134 1090 1128 1108 1140 1110 1136 1096 1146 1088 1170 1078 1205 1068 1232 1058 1228 1040z"/>
              <path d="M1060 1188L1072 1195 1090 1184 1115 1186 1134 1188 1148 1180 1156 1170 1170 1178 1172 1190 1178 1198 1168 1214 1158 1218 1150 1240 1150 1262 1142 1270 1125 1290 1100 1300 1090 1308 1078 1302 1056 1302 1030 1286 1026 1270 1022 1235 1042 1218 1058 1204z"/>
              <path fill="none" d="M1010 1062l24 10-20 4zM1068 1066l22 12M1126 1092l12 10-18 6M990 1074l16 4M1060 1190l8 12-12 2"/>
            </g>
          </g>
          <g id="cities"></g>
        </svg>
        <div class="ml-[1px] flex w-[19px] flex-col border-r border-[#aaa] bg-[#dcdcdc]">
          <span class="flex h-[17px] items-center justify-center border-b border-[#bbb] bg-white pt-px"><svg class="h-[6px] w-[8px]" viewBox="0 0 8 6"><path d="M.5 5L4 1.500 7.500 5" fill="none" stroke="#606060" stroke-width="1.500"/></svg></span>
          <span class="flex-1"></span>
          <span class="flex h-[19px] items-center justify-center border border-[#999] bg-white"><svg class="h-[6px] w-[8px]" viewBox="0 0 8 6"><path d="M.5 1L4 4.500 7.500 1" fill="none" stroke="#606060" stroke-width="1.500"/></svg></span>
        </div>
      </div>
      <div class="flex h-[20px] items-center border-l-2 border-b border-[#aaa]">
        <span class="flex h-full w-[16px] items-start justify-center border-r border-b border-[#2d9bdc] bg-[#d5eafa] pt-[3px]"><svg class="h-[9px] w-[9px]" viewBox="0 0 9 9"><path d="M.5.500h8v8h-8z" fill="#a9cf7d" stroke="#233"/><path d="M2 6l4-4" stroke="#fff"/></svg></span>
        <svg class="mb-[3px] ml-[5px] h-[9px] w-[8px]" viewBox="0 0 8 9"><path d="M.5.500h5l2 2v6h-7z" fill="#fff" stroke="#222"/><path d="M2 3.500h3M2 5.500h4" stroke="#28c"/></svg>
        <i class="ml-[4px] h-[14px] w-px bg-[#aaa]"></i>
        <svg class="mb-[3px] ml-[11px] h-[10px] w-[10px]" viewBox="0 0 10 10"><path d="M1 4.500c1-4 6-4 7.500-1M9 5.500c-1 4-6 4-7.500 1" fill="none" stroke="#154a7c" stroke-width="1.400"/><path d="M9.500 0v4h-4zM.5 10V6h4z" fill="#154a7c"/></svg>
        <svg class="mb-[4px] ml-[9px] h-[7px] w-[7px]"><path d="M1 0v7M5.500 0v7" stroke="#1d4f9c" stroke-width="2"/></svg>
        <span class="ml-[5px] flex h-full w-[17px] items-center justify-center border-l border-[#bbb] bg-white"><svg class="h-[8px] w-[6px]" viewBox="0 0 6 8"><path d="M5 .5L1.500 4 5 7.500" fill="none" stroke="#606060" stroke-width="1.500"/></svg></span>
        <span class="flex h-full flex-1 items-center justify-center gap-[2px] border-x border-[#aaa] bg-[#dcdcdc]"><i class="h-[6px] w-px bg-[#444]"></i><i class="h-[6px] w-px bg-[#444]"></i><i class="h-[6px] w-px bg-[#444]"></i></span>
        <span class="flex h-full w-[18px] items-center justify-center border-r border-[#aaa] bg-white"><svg class="h-[8px] w-[6px]" viewBox="0 0 6 8"><path d="M1 .5L4.500 4 1 7.500" fill="none" stroke="#606060" stroke-width="1.500"/></svg></span>
        <span class="w-[20px]"></span>
      </div>
    </section>

    <!-- attributes panel -->
    <aside class="flex h-full w-[277px] flex-col bg-[#fbfbfb] pl-[7px]">
      <div class="flex h-[22px] items-center bg-linear-to-r from-[#bccbdb] to-[#d7e4f2] pl-[4px] pr-1">
        <span class="flex-1 pt-px">属性</span><svg class="mr-[6px] h-[11px] w-[9px]"><use href="#pin"/></svg><svg class="h-[10px] w-[10px]"><use href="#xx"/></svg>
      </div>
      <div class="flex h-[26px] items-center bg-linear-to-b from-[#fdfdfd] to-[#f1f1f1] pl-[4px]">
        <span class="flex h-[22px] w-[22px] items-center justify-center border border-[#9aaec0] bg-[#dbe8f3]"><svg class="h-[18px] w-[18px]"><use href="#r1"/></svg></span>
        <svg class="ml-[4px] h-[16px] w-[16px]"><use href="#r2"/></svg><i class="mx-[5px] h-[14px] w-px bg-[#aaa]"></i><svg class="h-[16px] w-[18px]"><use href="#r3"/></svg><i class="mx-[4px] h-[14px] w-px bg-[#aaa]"></i><svg class="h-[15px] w-[16px] opacity-40 grayscale"><use href="#l5"/></svg>
        <i class="ml-[5px] border-x-[3px] border-t-[3px] border-x-transparent border-t-[#888]"></i>
      </div>
      <div class="h-[187px] border border-[#828790] bg-[#f0f0f0]"></div>
      <div class="flex h-[14px] items-center justify-end gap-[2px] bg-[#f0f0f0]">
        <i class="mr-auto h-px w-[180px] bg-[#999]"></i>
        <svg class="mb-[2px] h-[11px] w-[11px]" viewBox="0 0 11 11"><path d="M.5.500h10v10H.5z" fill="#fff" stroke="#000"/><path d="M3 5.500L5.500 3 8 5.500M3 8.500L5.500 6 8 8.500" fill="none" stroke="#000" stroke-width="1.200"/></svg>
        <svg class="mb-[2px] h-[11px] w-[11px]" viewBox="0 0 11 11"><path d="M.5.500h10v10H.5z" fill="#fff" stroke="#000"/><path d="M5.500 3v5" stroke="#000"/></svg>
      </div>
      <div class="flex-1 bg-[#f0f0f0]"></div>
      <div class="flex h-[20px] pl-[2px]">
        <span class="flex h-[18px] w-[53px] items-center rounded-b-sm border-x border-b border-[#888] bg-white pl-[4px]"><svg class="mr-[4px] h-[14px] w-[15px]" viewBox="0 0 15 14"><path d="M.5.500h14v13H.5z" fill="#e4f1fb" stroke="#2c648f"/><path d="M2 4h5M2 6.500h5M2 9h5M2 11h5M8.500 4h5M8.500 6.500h5M8.500 9h5M8.500 11h5" stroke="#559bd0"/></svg>属性</span>
        <span class="flex h-[18px] w-[76px] items-center rounded-b-sm border-r border-b border-[#999] bg-[#f3f3f3] pl-[4px] text-[#666]"><svg class="mr-[4px] h-[14px] w-[15px]" viewBox="0 0 15 14"><path d="M.5.500h11v13H.5z" fill="#eef5fb" stroke="#2c4668"/><path d="M2 3h3v2H2z" fill="#4b8"/><path d="M2 6h3v2H2z" fill="#c93"/><path d="M2 10h3v2H2z" fill="#47b"/><path d="M7 9l6-7" stroke="#e29a37" stroke-width="2.500"/><path d="M12.500 2.500L14 1" stroke="#c33" stroke-width="2.500"/></svg>创建要素</span>
      </div>
    </aside>
    <aside class="flex-1 bg-[#fcfcfc] pl-[2px] pt-[2px]">
      <div class="flex h-[52px] flex-col items-center rounded-l border-y border-l border-[#999] bg-[#f0f0f0] pt-[3px] text-[#555]"><svg class="h-[17px] w-[16px] shrink-0"><use href="#catalog"/></svg><span class="mt-[3px] [writing-mode:vertical-rl] [text-orientation:sideways]">目录</span></div>
      <div class="flex h-[52px] flex-col items-center rounded-l border-b border-l border-[#999] bg-[#f0f0f0] pt-[4px] text-[#555]"><svg class="h-[17px] w-[16px] shrink-0"><use href="#search"/></svg><span class="mt-[2px] [writing-mode:vertical-rl] [text-orientation:sideways]">搜索</span></div>
    </aside>
  </div>

  <footer class="flex flex-1 items-center border-t border-[#e4e4e4] bg-[#f0f0f0] pl-[1636px] pt-[3px] text-[12.500px]"><span class="inline-block w-[87px]">-3536843.081</span><span>5708313.52 米</span></footer>
</main>

<!-- join data dialog -->
<section class="absolute left-[718px] top-[169px] flex h-[743px] w-[484px] flex-col border border-[#5f6167] bg-[#f0f0f0] text-[15px]">
  <div class="flex h-[31px] shrink-0 items-center border-x-2 border-b border-x-[#9c9ca0] border-b-[#8c8c8c] bg-[#505050] pl-[3px] text-[#959595]"><span class="flex-1">连接数据</span><span class="flex h-full w-[43px] items-center justify-center border-l border-[#5a5a5a] text-[#222]"><svg class="-mt-[3px] h-[10px] w-[11px]"><use href="#wx"/></svg></span></div>
  <div class="flex flex-1 flex-col border-x-2 border-b-2 border-[#9c9ca0] px-[12px] pt-[12px] leading-[16px]">
    <div class="h-[16px]"><span class="text-[12.500px]">“</span>连接<span class="text-[12.500px]">”</span>可用于向该图层的属性表追加其他数据，因此可以使用这些数</div>
    <div class="h-[16px]">据执行符号化图层要素等操作。</div>
    <div class="mt-[15px] h-[16px]">要将哪些内容连接到该图层<span class="text-[13.500px]">(W)?</span></div>
    <div class="mt-[9px] flex h-[24px] w-[455px] shrink-0 items-center border border-[#777] bg-white pb-px pl-[3px]"><span class="flex-1">某一表的属性</span><svg class="mr-[4px] h-[7px] w-[10px]" viewBox="0 0 10 7"><path d="M1 1.500l4 4 4-4" fill="none" stroke="#444" stroke-width="1.800"/></svg></div>
    <div class="mt-[16px] flex h-[533px] w-[455px] shrink-0 flex-col rounded-sm border border-[#d5dfe5] px-[18px] pt-[11px] shadow-[inset_1px_1px_0_#fff,0_1px_0_#fff]">
      <div class="h-[16px]"><span class="inline-block w-[15px] text-[13px]">1.</span>选择该图层中连接将基于的字段<span class="text-[13.500px]">(C):</span></div>
      <div class="flex h-[429px] w-[410px] shrink-0 flex-col justify-end rounded-sm border border-t-0 border-[#d5dfe5] pb-[19px] pl-[38px] shadow-[0_1px_0_#fff]"><div class="h-[16px]">如果目标表中的记录在连接表中没有匹配项，该记录将</div><div class="h-[16px]">被从生成的目标表中移除。</div></div>
      <div class="ml-auto mr-[8px] mt-[12px] flex h-[26px] w-[152px] shrink-0 items-center justify-center border border-[#707070] bg-[#dddddd] pb-px">验证连接<span class="text-[13.500px]">(V)</span></div>
    </div>
    <div class="mt-[10px] flex"><span class="-mt-[2px] text-[#0000ff] underline underline-offset-2">关于连接数据</span><span class="ml-auto flex h-[26px] w-[86px] items-center justify-center border border-[#707070] bg-[#dddddd] pb-px">确定</span><span class="ml-[22px] mr-[1px] flex h-[26px] w-[86px] items-center justify-center border border-[#707070] bg-[#dddddd] pb-px">取消</span></div>
  </div>
</section>

<!-- validation progress dialog -->
<section class="absolute left-[752px] top-[349px] flex h-[383px] w-[417px] flex-col border border-[#5f6167] bg-[#f0f0f0] text-[15px]">
  <div class="flex h-[31px] shrink-0 items-center border-x-2 border-b border-x-[#9c9ca0] border-b-[#8c8c8c] bg-[#505050] pl-[3px] text-[#959595]">连接验证</div>
  <div class="flex flex-1 flex-col border-x-2 border-b-2 border-[#9c9ca0] px-[12px] pt-[14px]">
    <div class="h-[200px] w-[387px] shrink-0 border border-[#828790] bg-white p-px">
      <div class="mb-[-1px] flex h-[22px] border border-[#dedede] bg-[#fcfcfc]"><i class="w-[20px] border-r-2 border-[#dedede]"></i><span class="ml-[5px] mt-[2px]">验证任务</span></div>
      <div id="tasks"></div>
    </div>
    <div class="mt-[13px]">连接验证将检查创建连接时的常见错误。</div>
    <div class="mt-[16px] h-[28px] w-[387px] shrink-0 border border-[#22c63c] bg-[#03d529]"></div>
    <div class="ml-[150px] mt-[21px] flex h-[26px] w-[86px] shrink-0 items-center justify-center border border-[#707070] bg-[#dddddd] pb-[2px]">取消</div>
  </div>
</section>

<!-- validation report dialog -->
<section class="absolute left-[1202px] top-[347px] flex h-[359px] w-[541px] flex-col border border-[#2e2e2e] bg-[#505050] px-[8px] pb-[8px] text-[15px]">
  <div class="flex h-[37px] shrink-0 items-center text-white"><svg class="ml-[10px] h-[14px] w-[17px]"><use href="#ck"/></svg><span class="ml-[7px] flex-1">连接验证</span><span class="flex h-full w-[43px] items-center justify-center border border-t-0 border-[#6b3530] bg-[#c35a50] text-black"><svg class="-mt-px h-[10px] w-[12px]"><use href="#wx"/></svg></span></div>
  <div class="relative flex flex-1 flex-col border-y border-[#6c7788] bg-[#f0f0f0] px-[12px] pt-[13px]">
    <div class="flex h-[242px] w-[499px] justify-between border border-[#2b628f] p-px">
      <div class="pl-[4px] leading-[16px]">
        <div class="h-[16px]">所有字段和数据源验证任务均已成功完成。</div>
        <div class="h-[16px]"></div>
        <div class="h-[16px]">连接的匹配记录数目<span class="text-[13px]">:</span></div>
        <div class="h-[16px]"><span class="text-[13px]">-&nbsp;</span>通过将<span class="text-[13px]">&nbsp;&nbsp;&lt;</span>省级行政区<span class="text-[13px]">&gt;&nbsp;&nbsp;</span>中的<span class="text-[12.500px]">&nbsp;[NAME]&nbsp;</span>与<span class="text-[13px]">&nbsp;&lt;2020-2-19</span>全国新型冠状病毒肺</div>
        <div class="h-[16px]">炎<span class="text-[13px]">(NCP)-(COVID-19)</span>疫情情况<span class="text-[13px]">.csv&gt;&nbsp;&nbsp;</span>中的<span class="text-[12.500px]">&nbsp;[NAME]&nbsp;</span>连接，<span class="text-[13px]">34&nbsp;</span>个记录中有<span class="text-[13px]">&nbsp;34</span></div>
        <div class="h-[16px]">个匹配。</div>
        <div class="flex h-[16px]"><span>由于连接验证出错，匹配的记</span><span class="h-[16px] w-[211px] bg-[#0078d7] text-white">录可能不会出现在表格视图中。</span></div>
      </div>
      <div class="flex w-[21px] shrink-0 flex-col justify-between border border-[#bdbdbd] bg-white">
        <span class="flex h-[20px] items-center justify-center border-b border-[#bdbdbd]"><svg class="h-[7px] w-[10px]" viewBox="0 0 10 7"><path d="M1 6l4-4 4 4" fill="none" stroke="#777" stroke-width="1.400"/></svg></span>
        <span class="flex h-[20px] items-center justify-center border-t border-[#bdbdbd]"><svg class="h-[7px] w-[10px]" viewBox="0 0 10 7"><path d="M1 1l4 4 4-4" fill="none" stroke="#777" stroke-width="1.400"/></svg></span>
      </div>
    </div>
    <div class="ml-auto mt-[15px] flex h-[26px] w-[86px] items-center justify-center border border-[#3c7fb1] bg-[#dddddd] pb-[2px]">关闭</div>
    <svg class="absolute bottom-[2px] right-[3px] h-[11px] w-[11px]" fill="#b0b0b0"><path d="M8 0h2v2H8zM4 4h2v2H4zM8 4h2v2H8zM0 8h2v2H0zM4 8h2v2H4zM8 8h2v2H8z"/></svg>
  </div>
</section>

<div class="absolute left-[1638px] top-[1053px] text-[15px] leading-[18px] text-white/80 [text-shadow:0_0_1px_#888]">https://blog.csdn.net/weixin_42646103</div>

<script>
  const widgets = {
    '|': `<i class="mx-[2.5px] h-[15px] w-px shrink-0 bg-[#bdbdbd]"></i>`,
    label: `<span class="w-[51px] shrink-0">编辑器(R)</span>`,
    scale: `<span class="ml-px flex h-[22px] w-[148px] shrink-0 items-center border border-[#777] bg-white pl-[2px] font-['Liberation_Mono',monospace] text-[14px] tracking-[-0.4px]"><span class="flex-1">1:23,974,759</span><svg class="mr-[5px] h-[7px] w-[10px]" viewBox="0 0 10 7"><path d="M1 1l4 4 4-4" fill="none" stroke="#444" stroke-width="1.700"/></svg></span>`,
    pct: `<span class="flex h-[22px] w-[59px] shrink-0 items-center border border-[#aaa] bg-white pl-[2px] font-['Liberation_Mono',monospace] text-[13.5px]"><span class="flex h-[16px] w-[33px] items-center bg-[#0078d7] text-[#4d6f94]">100%</span><svg class="ml-[9px] h-[7px] w-[10px]" viewBox="0 0 10 7"><path d="M1 1l4 4 4-4" fill="none" stroke="#aaa" stroke-width="1.700"/></svg></span>`,
    over: `<span class="ml-auto flex h-[26px] w-[11px] shrink-0 flex-col items-center justify-end self-start rounded-r-sm bg-linear-to-b from-[#f6f6f6] to-[#a8a8a8] pb-[4px]"><i class="mb-[2px] h-px w-[6px] bg-black"></i><i class="border-x-[3px] border-t-[3px] border-x-transparent border-t-black"></i></span>`
  };
  document.querySelectorAll('[data-bar]').forEach(bar => {
    bar.innerHTML = bar.dataset.bar.split(' ').map(k => {
      if (widgets[k]) return widgets[k];
      const n = parseInt(k.slice(k.startsWith('grip') ? 4 : 1));
      if (k.startsWith('grip')) return `<span class="flex shrink-0 pl-[3px]" style="width:${n}px"><i class="h-[15px] border-l-2 border-dotted border-[#bbb]"></i></span>`;
      if (/^[vd]\d+$/.test(k)) return `<span class="flex shrink-0 justify-center ${k[0] === 'd' ? 'text-[#aaa]' : ''}" style="width:${n}px"><i class="border-x-[3px] border-t-[3px] border-x-transparent border-t-current"></i></span>`;
      const on = k[0] === '*', id = on ? k.slice(1) : k;
      const size = /^p\d+$/.test(id) ? 'h-[16px] w-[17px]' : 'h-[16px] w-[16px]';
      return `<span class="flex h-[22px] w-[22px] shrink-0 items-center justify-center ${on ? (id === 'p10' ? 'border border-[#8fa8bc] bg-[#dbe8f2]' : 'border border-[#0078d7] bg-[#dfeefa]') : ''}"><svg class="${size}"><use href="#${id}"/></svg></span>`;
    }).join('');
  });
  document.getElementById('tasks').innerHTML = ['检查字段名称是否以无效字符开头', '检查字段名称是否包含无效字符', '检查字段名称是否与保留字匹配', '检查是否存在非地理数据库<span class="text-[13px] leading-none">&nbsp;MS&nbsp;</span>访问表', '统计连接的匹配记录数目']
    .map(t => `<div class="flex h-[20px] items-center pl-[5px]"><svg class="mr-[7px] h-[12px] w-[14px]"><use href="#ck"/></svg><span>${t}</span></div>`).join('');
  document.getElementById('cities').innerHTML = [[1210, 747], [1285, 793], [1334, 807], [1117, 953]]
    .map(([x, y]) => `<g transform="translate(${x - 4} ${y - 5})"><path d="M2 1h1V0h2v1h1l2 1.500v4L6 9H2L0 7V2.500z"/><path d="M2 3h4v4H2z" fill="#5c0a80"/></g>`).join('');
</script>
</body>
</html>
